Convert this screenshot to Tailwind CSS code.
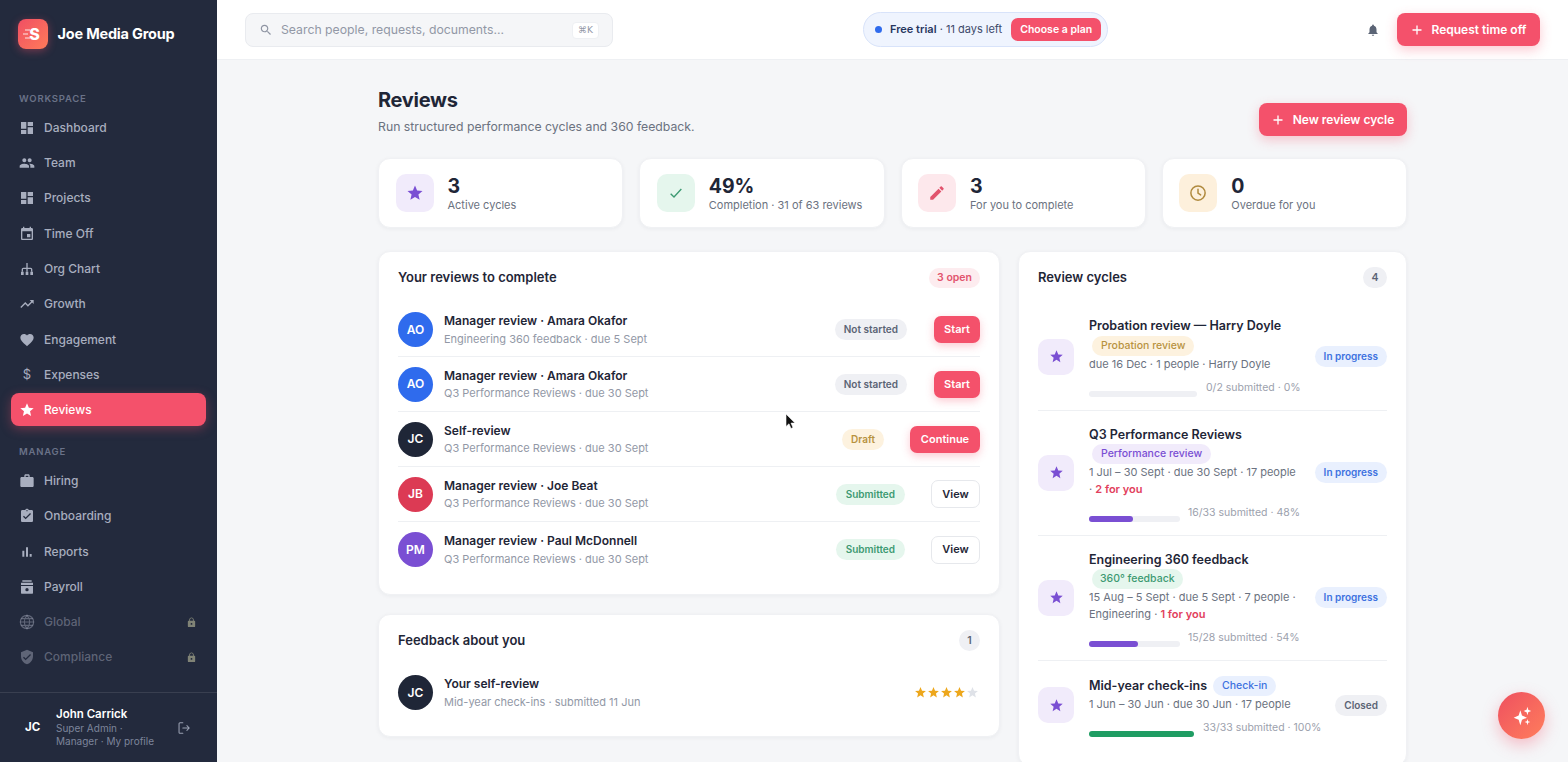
<!DOCTYPE html>
<html lang="en">
<head>
<meta charset="UTF-8" />
<title>Reviews</title>
<script src="https://cdn.jsdelivr.net/npm/@tailwindcss/browser@4"></script>
</head>
<body class="font-['Inter',sans-serif] bg-[#f5f6f8] text-[#1f2637] overflow-hidden">
<div class="flex h-[762px] w-[1568px] overflow-hidden relative">

  <!-- Sidebar -->
  <aside class="w-[217px] shrink-0 bg-[#232a3d] flex flex-col">
    <div class="flex items-center gap-[9.5px] pl-[18px] h-[67px]">
      <div class="w-[30px] h-[30px] rounded-[8px] bg-gradient-to-br from-[#f04e63] to-[#ff7a59] shadow-[0_2px_8px_rgba(244,81,105,0.4)] flex items-center justify-center text-white font-extrabold text-[16px] leading-none relative">
        <span class="ml-[3px]">S</span>
        <svg class="absolute left-[5px] top-[10px]" width="7" height="10" viewBox="0 0 7 10" stroke="#fff" stroke-width="1.2" opacity="0.85"><path d="M2 1h5M0 5h5M2 9h5"/></svg>
      </div>
      <span class="text-white font-bold text-[14.5px] tracking-[-0.2px]">Joe Media Group</span>
    </div>
    <nav class="flex-1 px-[11px]">
      <div class="text-[9.5px] font-semibold tracking-[0.8px] text-[#6a7288] pl-[8px] pt-[25.3px] pb-[6px] leading-[13px]">WORKSPACE</div>
      <a class="flex items-center gap-[9px] h-[33px] mb-[2.3px] px-[8px] text-[12px] font-medium text-[#a8aebf]">
        <svg class="w-[16px] h-[16px]" viewBox="0 0 24 24" fill="currentColor"><path d="M3 13h8V3H3v10zm0 8h8v-6H3v6zm10 0h8V11h-8v10zm0-18v6h8V3h-8z"/></svg>Dashboard</a>
      <a class="flex items-center gap-[9px] h-[33px] mb-[2.3px] px-[8px] text-[12px] font-medium text-[#a8aebf]">
        <svg class="w-[16px] h-[16px]" viewBox="0 0 24 24" fill="currentColor"><path d="M16 11c1.66 0 2.99-1.34 2.99-3S17.66 5 16 5c-1.66 0-3 1.34-3 3s1.34 3 3 3zm-8 0c1.66 0 2.99-1.34 2.99-3S9.66 5 8 5C6.34 5 5 6.34 5 8s1.34 3 3 3zm0 2c-2.33 0-7 1.17-7 3.5V19h14v-2.5c0-2.33-4.67-3.5-7-3.5zm8 0c-.29 0-.62.02-.97.05 1.16.84 1.97 1.97 1.97 3.45V19h6v-2.5c0-2.33-4.67-3.5-7-3.5z"/></svg>Team</a>
      <a class="flex items-center gap-[9px] h-[33px] mb-[2.3px] px-[8px] text-[12px] font-medium text-[#a8aebf]">
        <svg class="w-[16px] h-[16px]" viewBox="0 0 24 24" fill="currentColor"><path d="M3 13h8V3H3v10zm0 8h8v-6H3v6zm10 0h8V11h-8v10zm0-18v6h8V3h-8z"/></svg>Projects</a>
      <a class="flex items-center gap-[9px] h-[33px] mb-[2.3px] px-[8px] text-[12px] font-medium text-[#a8aebf]">
        <svg class="w-[16px] h-[16px]" viewBox="0 0 24 24" fill="currentColor"><path d="M17 12h-5v5h5v-5zM16 1v2H8V1H6v2H5c-1.11 0-1.99.9-1.99 2L3 19c0 1.1.89 2 2 2h14c1.1 0 2-.9 2-2V5c0-1.1-.9-2-2-2h-1V1h-2zm3 18H5V8h14v11z"/></svg>Time Off</a>
      <a class="flex items-center gap-[9px] h-[33px] mb-[2.3px] px-[8px] text-[12px] font-medium text-[#a8aebf]">
        <svg class="w-[16px] h-[16px]" viewBox="0 0 24 24" fill="none" stroke="currentColor" stroke-width="2"><path d="M12 3v6M5 16v-3.500a1.500 1.500 0 0 1 1.500-1.500h11a1.500 1.500 0 0 1 1.500 1.500V16M12 9v7"/><path fill="currentColor" stroke="none" d="M3 16h4v5H3zM10 16h4v5h-4zM17 16h4v5h-4z"/></svg>Org Chart</a>
      <a class="flex items-center gap-[9px] h-[33px] mb-[2.3px] px-[8px] text-[12px] font-medium text-[#a8aebf]">
        <svg class="w-[16px] h-[16px]" viewBox="0 0 24 24" fill="currentColor"><path d="M16 6l2.29 2.29-4.88 4.88-4-4L2 16.59 3.41 18l6-6 4 4 6.3-6.29L22 12V6z"/></svg>Growth</a>
      <a class="flex items-center gap-[9px] h-[33px] mb-[2.3px] px-[8px] text-[12px] font-medium text-[#a8aebf]">
        <svg class="w-[16px] h-[16px]" viewBox="0 0 24 24" fill="currentColor"><path d="M12 21.35l-1.45-1.32C5.4 15.36 2 12.28 2 8.5 2 5.42 4.42 3 7.5 3c1.74 0 3.41.81 4.5 2.09C13.09 3.81 14.76 3 16.5 3 19.58 3 22 5.42 22 8.5c0 3.78-3.4 6.86-8.55 11.54L12 21.35z"/></svg>Engagement</a>
      <a class="flex items-center gap-[9px] h-[33px] mb-[2.3px] px-[8px] text-[12px] font-medium text-[#a8aebf]">
        <span class="w-[16px] text-center text-[13px] font-normal">$</span>Expenses</a>
      <a class="flex items-center gap-[9px] h-[33px] -mt-[0.4px] mb-[2.7px] px-[8px] text-[12px] font-medium text-white bg-[#f4516b] rounded-[8px] shadow-[0_3px_11px_rgba(244,81,107,0.35)]">
        <svg class="w-[16px] h-[16px]" viewBox="0 0 24 24" fill="currentColor"><path d="M12 17.27L18.18 21l-1.64-7.03L22 9.24l-7.19-.61L12 2 9.19 8.63 2 9.24l5.46 4.73L5.82 21z"/></svg>Reviews</a>
      <div class="text-[9.5px] font-semibold tracking-[0.8px] text-[#6a7288] pl-[8px] pt-[16px] pb-[6.5px] leading-[13px]">MANAGE</div>
      <a class="flex items-center gap-[9px] h-[33px] mb-[2.3px] px-[8px] text-[12px] font-medium text-[#a8aebf]">
        <svg class="w-[16px] h-[16px]" viewBox="0 0 24 24" fill="currentColor"><path d="M20 6h-4V4c0-1.11-.89-2-2-2h-4c-1.11 0-2 .89-2 2v2H4c-1.11 0-1.99.89-1.99 2L2 19c0 1.11.89 2 2 2h16c1.11 0 2-.89 2-2V8c0-1.11-.89-2-2-2zm-6 0h-4V4h4v2z"/></svg>Hiring</a>
      <a class="flex items-center gap-[9px] h-[33px] mb-[2.3px] px-[8px] text-[12px] font-medium text-[#a8aebf]">
        <svg class="w-[16px] h-[16px]" viewBox="0 0 24 24" fill="currentColor"><path d="M19 3h-4.18C14.4 1.84 13.3 1 12 1c-1.3 0-2.4.84-2.82 2H5c-1.1 0-2 .9-2 2v14c0 1.1.9 2 2 2h14c1.1 0 2-.9 2-2V5c0-1.1-.9-2-2-2zm-7 0c.55 0 1 .45 1 1s-.45 1-1 1-1-.45-1-1 .45-1 1-1zm-2 14l-4-4 1.41-1.41L10 14.17l6.59-6.59L18 9l-8 8z"/></svg>Onboarding</a>
      <a class="flex items-center gap-[9px] h-[33px] mb-[2.3px] px-[8px] text-[12px] font-medium text-[#a8aebf]">
        <svg class="w-[16px] h-[16px]" viewBox="0 0 24 24" fill="currentColor"><path d="M5 10h3v9H5zM10.500 5h3v14h-3zM16 15h3v4h-3z"/></svg>Reports</a>
      <a class="flex items-center gap-[9px] h-[33px] mb-[2.3px] px-[8px] text-[12px] font-medium text-[#a8aebf]">
        <svg class="w-[16px] h-[16px]" viewBox="0 0 24 24" fill="currentColor"><path d="M5 2h14v2H5zM3 5.500h18V9H3zM3 10.500h18V21a1 1 0 0 1-1 1H4a1 1 0 0 1-1-1zm9 3a2.500 2.500 0 1 0 0 5 2.500 2.500 0 0 0 0-5z"/></svg>Payroll</a>
      <a class="flex items-center gap-[9px] h-[33px] mb-[2.3px] px-[8px] text-[12px] font-medium text-[#a8aebf]/45">
        <svg class="w-[16px] h-[16px]" viewBox="0 0 24 24" fill="none" stroke="currentColor" stroke-width="1.800"><circle cx="12" cy="12" r="10"/><path d="M2 12h20M3.500 7h17M3.500 17h17M12 2c3 3 4 6 4 10s-1 7-4 10c-3-3-4-6-4-10s1-7 4-10z"/></svg>Global
        <svg class="w-[11px] h-[11px] ml-auto mr-[1px] text-[#a8a98f]/70" viewBox="0 0 24 24" fill="currentColor"><path d="M18 8h-1V6c0-2.760-2.240-5-5-5S7 3.240 7 6v2H6c-1.100 0-2 .9-2 2v10c0 1.100.9 2 2 2h12c1.100 0 2-.9 2-2V10c0-1.100-.9-2-2-2zm-6 9c-1.100 0-2-.9-2-2s.9-2 2-2 2 .9 2 2-.9 2-2 2zm3.100-9H8.900V6c0-1.710 1.390-3.100 3.100-3.100 1.710 0 3.100 1.390 3.100 3.100v2z"/></svg></a>
      <a class="flex items-center gap-[9px] h-[33px] mb-[2.3px] px-[8px] text-[12px] font-medium text-[#a8aebf]/45">
        <svg class="w-[16px] h-[16px]" viewBox="0 0 24 24" fill="currentColor"><path d="M12 1L3 5v6c0 5.550 3.840 10.740 9 12 5.160-1.260 9-6.450 9-12V5l-9-4zm-2 16l-4-4 1.410-1.410L10 14.170l6.590-6.590L18 9l-8 8z"/></svg>Compliance
        <svg class="w-[11px] h-[11px] ml-auto mr-[1px] text-[#a8a98f]/70" viewBox="0 0 24 24" fill="currentColor"><path d="M18 8h-1V6c0-2.760-2.240-5-5-5S7 3.240 7 6v2H6c-1.100 0-2 .9-2 2v10c0 1.100.9 2 2 2h12c1.100 0 2-.9 2-2V10c0-1.100-.9-2-2-2zm-6 9c-1.100 0-2-.9-2-2s.9-2 2-2 2 .9 2 2-.9 2-2 2zm3.100-9H8.900V6c0-1.710 1.390-3.100 3.100-3.100 1.710 0 3.100 1.390 3.100 3.100v2z"/></svg></a>
    </nav>
    <div class="h-[70px] border-t border-white/10 flex items-center pl-[25px] pr-[26px]">
      <span class="w-[31px] text-[11.5px] font-bold text-white shrink-0">JC</span>
      <div class="flex-1 min-w-0">
        <div class="text-[11.5px] font-semibold text-white leading-[14px]">John Carrick</div>
        <div class="text-[10px] text-[#7d859b] leading-[13px] mt-[1px] w-[110px]">Super Admin · Manager · My profile</div>
      </div>
      <svg class="w-[14px] h-[14px] text-[#9aa1b3]" viewBox="0 0 24 24" fill="none" stroke="currentColor" stroke-width="1.800" stroke-linecap="round" stroke-linejoin="round"><path d="M10 3H5a1.500 1.500 0 0 0-1.500 1.500v15A1.500 1.500 0 0 0 5 21h5M10 12h11M17 8l4 4-4 4"/></svg>
    </div>
  </aside>

  <div class="flex-1 min-w-0 flex flex-col">
    <!-- Top bar -->
    <header class="h-[60px] shrink-0 bg-white border-b border-[#eef0f3] flex items-center pl-[28px] pr-[28px]">
      <div class="w-[368px] h-[34px] rounded-[8px] bg-[#f5f6f8] border border-[#e9ebef] flex items-center pl-[13px] pr-[13px]">
        <svg class="w-[14px] h-[14px] text-[#8f95a3]" viewBox="0 0 24 24" fill="currentColor"><path d="M15.500 14h-.790l-.280-.270C15.410 12.590 16 11.110 16 9.500 16 5.910 13.090 3 9.500 3S3 5.910 3 9.500 5.910 16 9.500 16c1.610 0 3.090-.590 4.230-1.570l.270.280v.790l5 4.990L20.490 19l-4.990-5zm-6 0C7.010 14 5 11.990 5 9.500S7.010 5 9.500 5 14 7.010 14 9.500 11.990 14 9.500 14z"/></svg>
        <span class="ml-[8px] mt-[1px] text-[12.25px] text-[#9298a6]">Search people, requests, documents...</span>
        <span class="ml-auto mt-[1px] text-[9px] text-[#9298a6] bg-white border border-[#eef0f3] rounded-[4px] px-[5px] h-[17px] leading-[15px] font-['DejaVu_Sans',sans-serif]">⌘K</span>
      </div>
      <div class="ml-[250px] w-[245px] h-[35px] rounded-full bg-[#eff4fe] border border-[#d8e3fa] flex items-center pl-[11px] -mt-[1px]">
        <span class="w-[7px] h-[7px] rounded-full bg-[#2f6bed] shrink-0"></span>
        <span class="ml-[8px] text-[11px] text-[#3d4a6b] whitespace-nowrap"><b class="font-semibold text-[#27365f]">Free trial</b> · 11 days left</span>
        <span class="ml-[9px] w-[90px] text-center h-[23px] rounded-[7px] bg-[#f4516b] text-white text-[10.5px] font-semibold leading-[23px] whitespace-nowrap shrink-0">Choose a plan</span>
      </div>
      <svg class="ml-auto w-[14px] h-[14px] text-[#5b6475]" viewBox="0 0 24 24" fill="currentColor"><path d="M12 22c1.100 0 2-.9 2-2h-4c0 1.100.9 2 2 2zm6-6v-5c0-3.070-1.640-5.640-4.500-6.320V4c0-.830-.670-1.500-1.500-1.500s-1.500.670-1.500 1.500v.680C7.630 5.360 6 7.920 6 11v5l-2 2v1h16v-1l-2-2z"/></svg>
      <a class="ml-[17px] w-[143px] h-[33px] pt-[1px] rounded-[8px] bg-[#f4516b] text-white text-[12px] font-semibold flex items-center justify-center gap-[9px] shadow-[0_4px_12px_rgba(244,81,107,0.3)] -mt-[1px]">
        <svg class="w-[12px] h-[12px]" viewBox="0 0 12 12" stroke="currentColor" stroke-width="1.300" fill="none"><path d="M6 1.500v9M1.500 6h9"/></svg>Request time off</a>
    </header>

    <!-- Page -->
    <main class="flex-1 overflow-hidden">
      <div class="w-[1029px] mx-auto pt-[28px]">
        <div class="flex justify-between items-start h-[70px]">
          <div>
            <h1 class="text-[20px] font-bold leading-[25px] tracking-[-0.3px]">Reviews</h1>
            <p class="text-[12.25px] text-[#6b7280] leading-[16px] mt-[6px]">Run structured performance cycles and 360 feedback.</p>
          </div>
          <a class="mt-[15px] w-[148px] h-[33px] rounded-[8px] bg-[#f4516b] text-white text-[12px] font-semibold flex items-center justify-center gap-[9px] shadow-[0_4px_12px_rgba(244,81,107,0.3)]">
            <svg class="w-[12px] h-[12px]" viewBox="0 0 12 12" stroke="currentColor" stroke-width="1.300" fill="none"><path d="M6 1.500v9M1.500 6h9"/></svg>New review cycle</a>
        </div>

        <!-- Stats -->
        <div class="grid grid-cols-4 gap-[16px]">
          <div class="h-[70px] bg-white rounded-[12px] border border-[#f0f1f4] shadow-[0_1px_4px_rgba(20,30,50,0.05)] flex items-center pl-[16.5px] gap-[14px]">
            <div class="w-[38px] h-[38px] rounded-[10px] bg-[#f1ebfb] flex items-center justify-center">
              <svg class="w-[18px] h-[18px] text-[#7a4fd3]" viewBox="0 0 24 24" fill="currentColor"><path d="M12 17.270L18.180 21l-1.640-7.030L22 9.240l-7.190-.610L12 2 9.190 8.630 2 9.240l5.460 4.730L5.820 21z"/></svg>
            </div>
            <div class="pb-[1px]"><div class="text-[19.5px] font-bold leading-[24px]">3</div><div class="text-[11px] text-[#6b7280] leading-[14px]">Active cycles</div></div>
          </div>
          <div class="h-[70px] bg-white rounded-[12px] border border-[#f0f1f4] shadow-[0_1px_4px_rgba(20,30,50,0.05)] flex items-center pl-[16.5px] gap-[14px]">
            <div class="w-[38px] h-[38px] rounded-[10px] bg-[#e5f6ed] flex items-center justify-center">
              <svg class="w-[16px] h-[16px] text-[#3d9a72]" viewBox="0 0 24 24" fill="none" stroke="currentColor" stroke-width="2"><path d="M4 13l5 5L20 6"/></svg>
            </div>
            <div class="pb-[1px]"><div class="text-[19.5px] font-bold leading-[24px]">49%</div><div class="text-[11px] text-[#6b7280] leading-[14px]">Completion · 31 of 63 reviews</div></div>
          </div>
          <div class="h-[70px] bg-white rounded-[12px] border border-[#f0f1f4] shadow-[0_1px_4px_rgba(20,30,50,0.05)] flex items-center pl-[16.5px] gap-[14px]">
            <div class="w-[38px] h-[38px] rounded-[10px] bg-[#fde8ec] flex items-center justify-center">
              <svg class="w-[18px] h-[18px] text-[#e2536d]" viewBox="0 0 24 24" fill="currentColor"><path d="M3 17.250V21h3.750L17.810 9.940l-3.750-3.750L3 17.250zM20.710 7.040c.390-.390.390-1.020 0-1.410l-2.340-2.340c-.390-.390-1.020-.390-1.410 0l-1.830 1.830 3.750 3.750 1.830-1.830z"/></svg>
            </div>
            <div class="pb-[1px]"><div class="text-[19.5px] font-bold leading-[24px]">3</div><div class="text-[11px] text-[#6b7280] leading-[14px]">For you to complete</div></div>
          </div>
          <div class="h-[70px] bg-white rounded-[12px] border border-[#f0f1f4] shadow-[0_1px_4px_rgba(20,30,50,0.05)] flex items-center pl-[16.5px] gap-[14px]">
            <div class="w-[38px] h-[38px] rounded-[10px] bg-[#fdf0dc] flex items-center justify-center">
              <svg class="w-[18px] h-[18px] text-[#b08a3e]" viewBox="0 0 24 24" fill="none" stroke="currentColor" stroke-width="2" stroke-linecap="round"><circle cx="12" cy="12" r="9.500"/><path d="M12 7v5l3.500 2.500"/></svg>
            </div>
            <div class="pb-[1px]"><div class="text-[19.5px] font-bold leading-[24px]">0</div><div class="text-[11px] text-[#6b7280] leading-[14px]">Overdue for you</div></div>
          </div>
        </div>

        <div class="grid grid-cols-[622px_389px] gap-[18px] mt-[23px] items-start">
          <div>
            <!-- Your reviews -->
            <section class="h-[344px] bg-white rounded-[12px] border border-[#f0f1f4] shadow-[0_1px_4px_rgba(20,30,50,0.05)] px-[19px]">
              <div class="flex justify-between items-center h-[51px]">
                <h2 class="text-[13px] font-semibold">Your reviews to complete</h2>
                <span class="h-[20px] px-[8px] rounded-full bg-[#fdecef] text-[#e2536d] text-[10.5px] font-semibold leading-[20px]">3 open</span>
              </div>
              <div class="flex items-center h-[54px] border-b border-[#eef0f3]">
                <div class="w-[35px] h-[35px] rounded-full bg-[#2f6bed] text-white text-[12px] font-semibold flex items-center justify-center shrink-0">AO</div>
                <div class="ml-[11px] flex-1">
                  <div class="text-[12px] font-semibold leading-[16px]">Manager review · Amara Okafor</div>
                  <div class="text-[11px] text-[#9298a6] leading-[14px] mt-[2.5px]">Engineering 360 feedback · due 5 Sept</div>
                </div>
                <span class="h-[21px] px-[9px] rounded-full bg-[#eff0f4] text-[#5b6475] text-[10px] font-semibold leading-[21px]">Not started</span>
                <a class="ml-[27px] h-[27px] w-[46px] rounded-[7px] bg-[#f4516b] text-white text-[11px] font-semibold flex items-center justify-center shadow-[0_3px_9px_rgba(244,81,107,0.3)]">Start</a>
              </div>
              <div class="flex items-center h-[55px] border-b border-[#eef0f3]">
                <div class="w-[35px] h-[35px] rounded-full bg-[#2f6bed] text-white text-[12px] font-semibold flex items-center justify-center shrink-0">AO</div>
                <div class="ml-[11px] flex-1">
                  <div class="text-[12px] font-semibold leading-[16px]">Manager review · Amara Okafor</div>
                  <div class="text-[11px] text-[#9298a6] leading-[14px] mt-[2.5px]">Q3 Performance Reviews · due 30 Sept</div>
                </div>
                <span class="h-[21px] px-[9px] rounded-full bg-[#eff0f4] text-[#5b6475] text-[10px] font-semibold leading-[21px]">Not started</span>
                <a class="ml-[27px] h-[27px] w-[46px] rounded-[7px] bg-[#f4516b] text-white text-[11px] font-semibold flex items-center justify-center shadow-[0_3px_9px_rgba(244,81,107,0.3)]">Start</a>
              </div>
              <div class="flex items-center h-[55px] border-b border-[#eef0f3]">
                <div class="w-[35px] h-[35px] rounded-full bg-[#1f2637] text-white text-[12px] font-semibold flex items-center justify-center shrink-0">JC</div>
                <div class="ml-[11px] flex-1">
                  <div class="text-[12px] font-semibold leading-[16px]">Self-review</div>
                  <div class="text-[11px] text-[#9298a6] leading-[14px] mt-[2.5px]">Q3 Performance Reviews · due 30 Sept</div>
                </div>
                <span class="h-[21px] px-[9px] rounded-full bg-[#fdf2df] text-[#b8923f] text-[10px] font-semibold leading-[21px]">Draft</span>
                <a class="ml-[26px] h-[27px] w-[70px] rounded-[7px] bg-[#f4516b] text-white text-[11px] font-semibold flex items-center justify-center shadow-[0_3px_9px_rgba(244,81,107,0.3)]">Continue</a>
              </div>
              <div class="flex items-center h-[55px] border-b border-[#eef0f3]">
                <div class="w-[35px] h-[35px] rounded-full bg-[#dc3a54] text-white text-[12px] font-semibold flex items-center justify-center shrink-0">JB</div>
                <div class="ml-[11px] flex-1">
                  <div class="text-[12px] font-semibold leading-[16px]">Manager review · Joe Beat</div>
                  <div class="text-[11px] text-[#9298a6] leading-[14px] mt-[2.5px]">Q3 Performance Reviews · due 30 Sept</div>
                </div>
                <span class="h-[21px] px-[10px] rounded-full bg-[#e5f6ed] text-[#3d9a72] text-[10px] font-semibold leading-[21px]">Submitted</span>
                <a class="ml-[26px] h-[28px] w-[49px] rounded-[7px] bg-white border border-[#e6e8ec] text-[#1f2637] text-[11px] font-semibold flex items-center justify-center">View</a>
              </div>
              <div class="flex items-center h-[55px]">
                <div class="w-[35px] h-[35px] rounded-full bg-[#7a4fd3] text-white text-[12px] font-semibold flex items-center justify-center shrink-0">PM</div>
                <div class="ml-[11px] flex-1">
                  <div class="text-[12px] font-semibold leading-[16px]">Manager review · Paul McDonnell</div>
                  <div class="text-[11px] text-[#9298a6] leading-[14px] mt-[2.5px]">Q3 Performance Reviews · due 30 Sept</div>
                </div>
                <span class="h-[21px] px-[10px] rounded-full bg-[#e5f6ed] text-[#3d9a72] text-[10px] font-semibold leading-[21px]">Submitted</span>
                <a class="ml-[26px] h-[28px] w-[49px] rounded-[7px] bg-white border border-[#e6e8ec] text-[#1f2637] text-[11px] font-semibold flex items-center justify-center">View</a>
              </div>
            </section>

            <!-- Feedback -->
            <section class="h-[123px] mt-[19px] bg-white rounded-[12px] border border-[#f0f1f4] shadow-[0_1px_4px_rgba(20,30,50,0.05)] px-[19px]">
              <div class="flex justify-between items-center h-[51px]">
                <h2 class="text-[13px] font-semibold">Feedback about you</h2>
                <span class="w-[21px] h-[21px] rounded-full bg-[#eff0f4] text-[#5b6475] text-[10.5px] font-semibold flex items-center justify-center">1</span>
              </div>
              <div class="flex items-center h-[55px] -mt-[1px]">
                <div class="w-[35px] h-[35px] rounded-full bg-[#1f2637] text-white text-[12px] font-semibold flex items-center justify-center shrink-0">JC</div>
                <div class="ml-[11px] flex-1">
                  <div class="text-[12px] font-semibold leading-[16px]">Your self-review</div>
                  <div class="text-[11px] text-[#9298a6] leading-[14px] mt-[2.5px]">Mid-year check-ins · submitted 11 Jun</div>
                </div>
                <div class="flex mr-[1px]">
                  <svg class="w-[13px] h-[13px] text-[#eda71c]" viewBox="0 0 24 24" fill="currentColor"><path d="M12 17.270L18.180 21l-1.640-7.030L22 9.240l-7.190-.610L12 2 9.190 8.630 2 9.240l5.460 4.730L5.820 21z"/></svg>
                  <svg class="w-[13px] h-[13px] text-[#eda71c]" viewBox="0 0 24 24" fill="currentColor"><path d="M12 17.270L18.180 21l-1.640-7.030L22 9.240l-7.190-.610L12 2 9.190 8.630 2 9.240l5.460 4.730L5.820 21z"/></svg>
                  <svg class="w-[13px] h-[13px] text-[#eda71c]" viewBox="0 0 24 24" fill="currentColor"><path d="M12 17.270L18.180 21l-1.640-7.030L22 9.240l-7.190-.610L12 2 9.190 8.630 2 9.240l5.460 4.730L5.820 21z"/></svg>
                  <svg class="w-[13px] h-[13px] text-[#eda71c]" viewBox="0 0 24 24" fill="currentColor"><path d="M12 17.270L18.180 21l-1.640-7.030L22 9.240l-7.190-.610L12 2 9.190 8.630 2 9.240l5.460 4.730L5.820 21z"/></svg>
                  <svg class="w-[13px] h-[13px] text-[#dfe2e8]" viewBox="0 0 24 24" fill="currentColor"><path d="M12 17.270L18.180 21l-1.640-7.030L22 9.240l-7.190-.610L12 2 9.190 8.630 2 9.240l5.460 4.730L5.820 21z"/></svg>
                </div>
              </div>
            </section>
          </div>

          <!-- Review cycles -->
          <section class="bg-white rounded-[12px] border border-[#f0f1f4] shadow-[0_1px_4px_rgba(20,30,50,0.05)] px-[19px] pb-[16px]">
            <div class="flex justify-between items-center h-[51px]">
              <h2 class="text-[13px] font-semibold">Review cycles</h2>
              <span class="w-[24px] h-[21px] rounded-full bg-[#eff0f4] text-[#5b6475] text-[10.5px] font-semibold flex items-center justify-center">4</span>
            </div>

            <div class="flex items-center h-[108px] border-b border-[#eef0f3]">
              <div class="w-[36px] h-[36px] rounded-[10px] bg-[#f1ebfb] flex items-center justify-center shrink-0">
                <svg class="w-[15px] h-[15px] text-[#7a4fd3]" viewBox="0 0 24 24" fill="currentColor"><path d="M12 17.270L18.180 21l-1.640-7.030L22 9.240l-7.190-.610L12 2 9.190 8.630 2 9.240l5.460 4.730L5.820 21z"/></svg>
              </div>
              <div class="ml-[15px] flex-1 min-w-0 mt-[2px]">
                <div class="text-[12.5px] font-semibold leading-[16px]">Probation review — Harry Doyle</div>
                <span class="block w-fit ml-[3px] mt-[2px] h-[20px] px-[9px] rounded-full bg-[#fdf2df] text-[#b8923f] text-[10.5px] font-medium leading-[20px]">Probation review</span>
                <div class="text-[11px] text-[#6b7280] leading-[17px]">due 16 Dec · 1 people · Harry Doyle</div>
                <div class="flex items-start gap-[9px] mt-[8px]">
                  <div class="w-[108px] h-[6px] rounded-full bg-[#eff0f4] mt-[10px]"></div>
                  <span class="text-[10.5px] text-[#9ca1ad] leading-[14px]">0/2 submitted · 0%</span>
                </div>
              </div>
              <span class="h-[21px] px-[9px] rounded-full bg-[#e9f0fe] text-[#3d72e0] text-[10px] font-semibold leading-[21px] shrink-0">In progress</span>
            </div>

            <div class="flex items-center h-[125px] pb-[1px] border-b border-[#eef0f3]">
              <div class="w-[36px] h-[36px] rounded-[10px] bg-[#f1ebfb] flex items-center justify-center shrink-0">
                <svg class="w-[15px] h-[15px] text-[#7a4fd3]" viewBox="0 0 24 24" fill="currentColor"><path d="M12 17.270L18.180 21l-1.640-7.030L22 9.240l-7.190-.610L12 2 9.190 8.630 2 9.240l5.460 4.730L5.820 21z"/></svg>
              </div>
              <div class="ml-[15px] flex-1 min-w-0 mt-[3px]">
                <div class="text-[12.5px] font-semibold leading-[16px]">Q3 Performance Reviews</div>
                <span class="block w-fit ml-[3px] mt-[1px] h-[20px] px-[9px] rounded-full bg-[#f1ebfb] text-[#7a4fd3] text-[10.5px] font-medium leading-[20px]">Performance review</span>
                <div class="text-[11px] text-[#6b7280] leading-[17px] w-[212px]">1 Jul – 30 Sept · due 30 Sept · 17 people · <b class="font-semibold text-[#e2405c]">2 for you</b></div>
                <div class="flex items-start gap-[8px] mt-[8px]">
                  <div class="w-[91px] h-[6px] rounded-full bg-[#eff0f4] mt-[10px]"><div class="h-full rounded-full bg-[#7a4fd3]" style="width:48%"></div></div>
                  <span class="text-[10.5px] text-[#9ca1ad] leading-[14px]">16/33 submitted · 48%</span>
                </div>
              </div>
              <span class="h-[21px] px-[9px] rounded-full bg-[#e9f0fe] text-[#3d72e0] text-[10px] font-semibold leading-[21px] shrink-0">In progress</span>
            </div>

            <div class="flex items-center h-[125px] pb-[1px] border-b border-[#eef0f3]">
              <div class="w-[36px] h-[36px] rounded-[10px] bg-[#f1ebfb] flex items-center justify-center shrink-0">
                <svg class="w-[15px] h-[15px] text-[#7a4fd3]" viewBox="0 0 24 24" fill="currentColor"><path d="M12 17.270L18.180 21l-1.640-7.030L22 9.240l-7.190-.610L12 2 9.190 8.630 2 9.240l5.460 4.730L5.820 21z"/></svg>
              </div>
              <div class="ml-[15px] flex-1 min-w-0 mt-[3px]">
                <div class="text-[12.5px] font-semibold leading-[16px]">Engineering 360 feedback</div>
                <span class="block w-fit ml-[3px] mt-[1px] h-[20px] px-[8px] rounded-full bg-[#e5f6ed] text-[#3d9a72] text-[10.5px] font-medium leading-[20px]">360° feedback</span>
                <div class="text-[11px] text-[#6b7280] leading-[17px] w-[212px]">15 Aug – 5 Sept · due 5 Sept · 7 people · Engineering · <b class="font-semibold text-[#e2405c]">1 for you</b></div>
                <div class="flex items-start gap-[8px] mt-[8px]">
                  <div class="w-[91px] h-[6px] rounded-full bg-[#eff0f4] mt-[10px]"><div class="h-full rounded-full bg-[#7a4fd3]" style="width:54%"></div></div>
                  <span class="text-[10.5px] text-[#9ca1ad] leading-[14px]">15/28 submitted · 54%</span>
                </div>
              </div>
              <span class="h-[21px] px-[9px] rounded-full bg-[#e9f0fe] text-[#3d72e0] text-[10px] font-semibold leading-[21px] shrink-0">In progress</span>
            </div>

            <div class="flex items-center h-[88px]">
              <div class="w-[36px] h-[36px] rounded-[10px] bg-[#f1ebfb] flex items-center justify-center shrink-0">
                <svg class="w-[15px] h-[15px] text-[#7a4fd3]" viewBox="0 0 24 24" fill="currentColor"><path d="M12 17.270L18.180 21l-1.640-7.030L22 9.240l-7.190-.610L12 2 9.190 8.630 2 9.240l5.460 4.730L5.820 21z"/></svg>
              </div>
              <div class="ml-[15px] flex-1 min-w-0 mt-[2px]">
                <div class="flex items-center"><span class="text-[12.5px] font-semibold leading-[16px]">Mid-year check-ins</span><span class="ml-[6px] h-[20px] px-[9px] rounded-full bg-[#e9f0fe] text-[#3d72e0] text-[10.5px] font-medium leading-[20px]">Check-in</span></div>
                <div class="text-[11px] text-[#6b7280] leading-[16px]">1 Jun – 30 Jun · due 30 Jun · 17 people</div>
                <div class="flex items-start gap-[9px] mt-[9px]">
                  <div class="w-[105px] h-[6px] rounded-full bg-[#1f9d63] mt-[10px]"></div>
                  <span class="text-[10.5px] text-[#9ca1ad] leading-[14px]">33/33 submitted · 100%</span>
                </div>
              </div>
              <span class="h-[21px] px-[9px] rounded-full bg-[#eff0f4] text-[#5b6475] text-[10px] font-semibold leading-[21px] shrink-0">Closed</span>
            </div>
          </section>
        </div>
      </div>
    </main>
  </div>

  <!-- Floating assistant button -->
  <div class="absolute left-[1498px] top-[692px] w-[47px] h-[47px] rounded-full bg-gradient-to-br from-[#ee4f5f] to-[#ff7d5c] shadow-[0_6px_16px_rgba(244,81,107,0.35)] flex items-center justify-center">
    <svg class="w-[20px] h-[20px] text-white" viewBox="0 0 24 24" fill="currentColor"><path d="M10 5l2 6.500L18 14l-6 2.500L10 23l-2-6.500L2 14l6-2.500zM18.500 1l1 3.500L23 6l-3.500 1.500-1 3.500-1-3.500L14 6l3.500-1.500zM18.500 15.500l.8 2.700 2.700 1-2.700 1-.8 2.800-.8-2.800-2.700-1 2.700-1z"/></svg>
  </div>

  <!-- Mouse pointer -->
  <svg class="absolute left-[785px] top-[413px]" width="11" height="17" viewBox="0 0 11 17"><path d="M1 1v12.500l3-2.700 2 4.700 2-.9-2-4.500h4z" fill="#111" stroke="#fff" stroke-width="0.600"/></svg>
</div>
</body>
</html>
